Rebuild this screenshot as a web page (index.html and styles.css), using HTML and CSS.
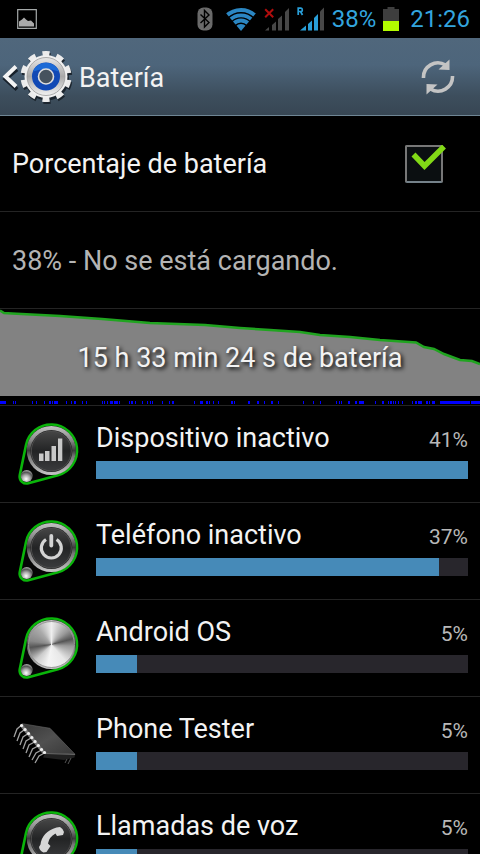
FILE: index.html
```html
<!DOCTYPE html>
<html lang="es">
<head>
<meta charset="utf-8">
<meta name="viewport" content="width=device-width, initial-scale=1">
<title>Batería</title>
<link rel="stylesheet" href="styles.css">
</head>
<body>
<svg class="defs" aria-hidden="true">
  <defs>
    <linearGradient id="rim" x1="0" y1="0" x2="0" y2="1">
      <stop offset="0" stop-color="#c4c4c4"/><stop offset=".3" stop-color="#888"/><stop offset=".5" stop-color="#3c3c3c"/><stop offset=".62" stop-color="#777"/><stop offset="1" stop-color="#c8c8c8"/>
    </linearGradient>
    <linearGradient id="face" x1="0" y1="0" x2="0" y2="1">
      <stop offset="0" stop-color="#464646"/><stop offset=".5" stop-color="#232425"/><stop offset="1" stop-color="#3a3b3d"/>
    </linearGradient>
    <radialGradient id="ball" cx=".45" cy=".75" r=".8">
      <stop offset="0" stop-color="#fff"/><stop offset=".4" stop-color="#aaa"/><stop offset=".7" stop-color="#555"/><stop offset="1" stop-color="#ccc"/>
    </radialGradient>
    <linearGradient id="gear" x1="0" y1="0" x2="0" y2="1">
      <stop offset="0" stop-color="#e8e8e8"/><stop offset=".5" stop-color="#a9a9a9"/><stop offset="1" stop-color="#f2f2f2"/>
    </linearGradient>
    <linearGradient id="chip" x1="0" y1="0" x2="1" y2="1">
      <stop offset="0" stop-color="#383838"/><stop offset=".5" stop-color="#505050"/><stop offset="1" stop-color="#383838"/>
    </linearGradient>
    <clipPath id="wedge"><path d="M15 24L-1 5V0H31V5Z"/></clipPath>
    <g id="badge">
      <path d="M13.900 26.400A25.800 25.800 0 1 1 46 56.200L16.400 64.300A7 7 0 0 1 7.700 56.400Z" fill="#050505" stroke="#0ab50a" stroke-width="2.600"/>
      <circle cx="39.300" cy="31.500" r="24.600" fill="url(#rim)"/>
      <circle cx="39.300" cy="32" r="21" fill="#222"/>
      <circle cx="39.300" cy="32" r="20" fill="url(#face)" stroke="#555" stroke-width=".8"/>
      <circle cx="14.700" cy="57" r="6" fill="url(#ball)"/>
    </g>
  </defs>
</svg>
<div class="app">
  <div class="status">
    <svg class="picture" width="20" height="20" viewBox="0 0 20 20" role="img" aria-label="Imagen"><path d="M.7.7h18.600v18.600H.7z" fill="none" stroke="#a5a9a9" stroke-width="1.200"/><path d="M2 17.500v-5l3-2 2-2 2 2 2 1.500 3-.5 3 3v3z" fill="#aaa"/></svg>
    <svg width="21" height="24" viewBox="0 0 21 24" role="img" aria-label="Bluetooth"><rect x=".5" y=".5" width="15" height="23" rx="6" fill="#6a6a6a"/><path d="M3.500 7.500l8.500 8-4.500 4.500V3.500L12 8l-8.500 8" fill="none" stroke="#000" stroke-width="1.400"/></svg>
    <svg width="30" height="24" viewBox="0 0 30 24" role="img" aria-label="Wi-Fi"><g clip-path="url(#wedge)" fill="none" stroke="#2b86c2" stroke-width="3.800"><circle cx="15" cy="24" r="3.500" stroke-width="7"/><circle cx="15" cy="24" r="10.500"/><circle cx="15" cy="24" r="15.700"/><circle cx="15" cy="24" r="21"/></g></svg>
    <svg width="25" height="24" viewBox="0 0 25 24" role="img" aria-label="Sin señal"><path d="M1 23.500l4-3.500v3.500zM8 18l4-3.500v9H8zM14 12l4-3.500v15h-4zM21 5l4-4v22.500h-4z" fill="#474747"/><path d="M1.200 2.200l8 8M9.200 2.200l-8 8" stroke="#b00d0d" stroke-width="2"/></svg>
    <svg width="27" height="24" viewBox="0 0 27 24" role="img" aria-label="Señal en itinerancia"><path d="M3 23.500l6-5v5zM11 17l4-3.500v10h-4zM17 11l4-4v16.500h-4z" fill="#299fd9"/><path d="M23 4.500l4-4v23h-4z" fill="#474747"/><path d="M1.200 8V1.200H4q1.300 0 1.300 1.700T4 4.500H1.200M3.500 4.500L5.500 8" fill="none" stroke="#299fd9" stroke-width="1.700"/></svg>
    <span>38%</span>
    <svg width="18" height="24" viewBox="0 0 18 24" role="img" aria-label="Batería"><path d="M3.500 0h7v2H15v12H-1V2h4.500z" fill="#3e3e3e"/><path d="M-1 14h16v10H-1z" fill="#b2fc00"/></svg>
    <time>21:26</time>
  </div>
  <header class="bar">
    <button class="up" aria-label="Volver">
      <svg width="75" height="56" viewBox="0 0 75 56">
        <path d="M17 20.500L5.500 30 17 40.500" fill="none" stroke="#17202a" stroke-width="4"/>
        <path d="M16 17.500L5.500 27.500 16 37.500" fill="none" stroke="#f4f4f4" stroke-width="4"/>
        <g transform="translate(46 27.500)">
          <circle cx="1" cy="2" r="22" fill="#1c252e"/>
          <circle cx="1" cy="2" r="22.500" fill="none" stroke="#1c252e" stroke-width="6" pathLength="20" stroke-dasharray="1 1" stroke-dashoffset=".5" transform="rotate(-90 1 2)"/>
          <circle r="22.500" fill="none" stroke="#ececec" stroke-width="6" pathLength="20" stroke-dasharray="1 1" stroke-dashoffset=".5" transform="rotate(-90)"/>
          <circle r="21.500" fill="#f0f0f0"/>
          <circle r="19" fill="url(#gear)" stroke="#999" stroke-width=".8"/>
          <circle r="14" fill="#1149b5"/>
          <path d="M-13-5A14 14 0 0 1 13-5Q0-10-13-5Z" fill="#1c6ad6"/>
          <circle r="7.500" fill="#46525e" stroke="#ddd" stroke-width="1.600"/>
        </g>
      </svg>
    </button>
    <h1>Batería</h1>
    <button class="refresh" aria-label="Actualizar">
      <svg width="36" height="36" viewBox="0 0 36 36"><g fill="none" stroke="#c4c4c4" stroke-width="3.600"><path d="M3.500 19A14.500 14.500 0 0 1 25.500 6"/><path d="M32.500 17A14.500 14.500 0 0 1 10.500 30"/></g><path d="M29.500.5v10.500l-11-.5zM6.500 35.500V25l11 .5z" fill="#c4c4c4"/></svg>
    </button>
  </header>
  <main>
    <label class="option">
      <span>Porcentaje de batería</span>
      <span class="tick">
        <input type="checkbox" checked>
        <svg width="44" height="38" viewBox="0 0 44 38" aria-hidden="true"><path d="M8.500 9.500L19.500 21 39 1.500" fill="none" stroke="#82d916" stroke-width="5.500"/></svg>
      </span>
    </label>
    <p class="state">38% - No se está cargando.</p>
    <section class="history">
      <svg class="curve" viewBox="0 0 480 96" preserveAspectRatio="none" aria-hidden="true">
        <path d="M0 1.500L4 4 12 4.500 60 7 102 10 150 14 205 16 240 19 270 21 300 23 320 26 350 28 380 31 416 33.500 424 38 434 40 444 45 452 48 460 51 472 52 480 55V87H0Z" fill="#828282"/>
        <path d="M0 1.500L4 4 12 4.500 60 7 102 10 150 14 205 16 240 19 270 21 300 23 320 26 350 28 380 31 416 33.500 424 38 434 40 444 45 452 48 460 51 472 52 480 55" fill="none" stroke="#20a420" stroke-width="2.500"/>
        <path d="M0 92h6v3H0zm13 0h1v3h-1zm2 0h1v3h-1zm17 0h1v3h-1zm4 0h1v3h-1zm8 0h1v3h-1zm5 0h2v3h-2zm3 0h1v3h-1zm2 0h4v3h-4zm12 0h1v3h-1zm5 0h1v3h-1zm3 0h2v3h-2zm8 0h1v3h-1zm4 0h1v3h-1zm16 0h1v3h-1zm2 0h1v3h-1zm3 0h1v3h-1zm3 0h3v3h-3zm4 0h4v3h-4zm5 0h1v3h-1zm10 0h1v3h-1zm2 0h2v3h-2zm4 0h1v3h-1zm7 0h1v3h-1zm5 0h1v3h-1zm3 0h1v3h-1zm2 0h1v3h-1zm10 0h1v3h-1zm7 0h1v3h-1zm3 0h2v3h-2zm22 0h1v3h-1zm6 0h3v3h-3zm6 0h2v3h-2zm3 0h1v3h-1zm4 0h1v3h-1zm5 0h1v3h-1zm13 0h2v3h-2zm3 0h1v3h-1zm14 0h2v3h-2zm9 0h2v3h-2zm7 0h1v3h-1zm7 0h2v3h-2zm7 0h1v3h-1zm25 0h1v3h-1zm10 0h1v3h-1zm7 0h1v3h-1zm16 0h1v3h-1zm3 0h1v3h-1zm2 0h1v3h-1zm7 0h2v3h-2zm7 0h2v3h-2zm4 0h5v3h-5zm16 0h1v3h-1zm7 0h2v3h-2zm6 0h1v3h-1zm2 0h2v3h-2zm3 0h1v3h-1zm2 0h1v3h-1zm3 0h1v3h-1zm4 0h1v3h-1zm10 0h1v3h-1zm3 0h2v3h-2zm3 0h4v3h-4zm8 0h2v3h-2zm3 0h1v3h-1zm3 0h3v3h-3zm8 0h30v3h-30zm31 0h9v3h-9z" fill="#00f"/>
      </svg>
      <p>15 h 33 min 24 s de batería</p>
    </section>
    <ul class="usage">
      <li>
        <svg class="icon" viewBox="0 0 72 72" aria-hidden="true"><use href="#badge"/><path d="M27 34.500h4.500V42H27zM33 32h4.500v10H33zM39.500 27H44v15h-4.500zM46 19.500h4.300V42H46z" fill="#c8c8c8"/></svg>
        <div class="detail"><div class="line"><span>Dispositivo inactivo</span><small>41%</small></div><div class="track"><div class="fill" style="width:100%"></div></div></div>
      </li>
      <li>
        <svg class="icon" viewBox="0 0 72 72" aria-hidden="true"><use href="#badge"/><path d="M34 23.500A10 10 0 1 0 44.600 23.500" fill="none" stroke="#d4d4d4" stroke-width="3.200"/><path d="M39.300 20v9.500" stroke="#d4d4d4" stroke-width="3.800" stroke-linecap="round"/></svg>
        <div class="detail"><div class="line"><span>Teléfono inactivo</span><small>37%</small></div><div class="track"><div class="fill" style="width:92.2%"></div></div></div>
      </li>
      <li>
        <svg class="icon" viewBox="0 0 72 72" aria-hidden="true"><use href="#badge"/><foreignObject x="16" y="8" width="47" height="47"><div class="steel"></div></foreignObject></svg>
        <div class="detail"><div class="line"><span>Android OS</span><small>5%</small></div><div class="track"><div class="fill" style="width:11%"></div></div></div>
      </li>
      <li>
        <svg class="icon" viewBox="0 0 72 72" aria-hidden="true">
          <path d="M10 13.700L38 18.300 63 44.300 33 43.300Z" fill="url(#chip)" stroke="#666" stroke-width=".6"/>
          <path d="M33 43.300L63 44.300 62.500 47.500 52 50 31 47.500Z" fill="#202020"/>
          <path d="M33 43.500L63 44.500" stroke="#777" stroke-width=".8"/>
          <path d="M59 48l-3 6M55 49l-2 4" stroke="#555" stroke-width="1"/>
          <path d="M9 15L32 43" stroke="#777" stroke-width="3"/>
          <path d="M8.500 16L5 19 2 27M12 20L8 23 5 31M15.500 24L11 27 8 35M19 28L14 31 11 39M22.500 32L17 35 14 43M26 36L20.500 39 17 47M29.500 40L24 43 20 50M32.500 43L27 46 23 53" fill="none" stroke="#a0a0a0" stroke-width="1.300"/>
          <path d="M9.500 15.500h.1M13 19.500h.1M16.500 23.500h.1M19.800 27.500h.1M23 31.500h.1M26.300 35.500h.1M29.500 39.500h.1M32.500 42.500h.1" stroke="#eee" stroke-width="3.200" stroke-linecap="round"/>
        </svg>
        <div class="detail"><div class="line"><span>Phone Tester</span><small>5%</small></div><div class="track"><div class="fill" style="width:11%"></div></div></div>
      </li>
      <li>
        <svg class="icon" viewBox="0 0 72 72" aria-hidden="true"><use href="#badge"/><path d="M44.500 20.500L48 20Q51.500 22 52 25L51 28 45 29 43.500 26.500Q37 30 36 36.500L38.500 39 34.500 45 31.500 45.500Q27.500 43.500 27 40L28.500 37.500Q30 25 44.500 20.500Z" fill="#d6d6d6"/></svg>
        <div class="detail"><div class="line"><span>Llamadas de voz</span><small>5%</small></div><div class="track"><div class="fill" style="width:11%"></div></div></div>
      </li>
    </ul>
  </main>
</div>
</body>
</html>
```
FILE: styles.css
```css
* {
  box-sizing: border-box;
}

body {
  margin: 0;
  background: #000;
  color: #f3f3f3;
  font: 27px/32px Roboto, sans-serif;
}

h1,
p,
ul {
  margin: 0;
  padding: 0;
}

button {
  display: flex;
  padding: 0;
  border: 0;
  background: none;
}

svg {
  display: block;
  flex: none;
}

.defs {
  position: absolute;
  width: 0;
  height: 0;
}

.app {
  display: flex;
  flex-direction: column;
  height: 100vh;
  overflow: hidden;
}

.status {
  display: flex;
  flex: none;
  align-items: center;
  gap: 8px;
  height: 38px;
  padding: 0 10px 0 17px;
  color: #33a5df;
  font-size: 24px;
}

.status svg {
  overflow: visible;
}

.picture {
  margin-right: auto;
}

.bar {
  display: flex;
  flex: none;
  align-items: center;
  gap: 4px;
  height: 78px;
  padding-right: 24px;
  border-bottom: 1px solid #6f8694;
  background: linear-gradient(#50677c, #4d657b 35%, #3d4e5d 75%, #374653);
}

h1 {
  flex: 1;
  padding-top: 2px;
  font-size: 27px;
  font-weight: 400;
}

main {
  flex: 1;
  min-height: 0;
  overflow: hidden;
}

.option,
.state,
.history,
.usage li {
  border-bottom: 1px solid #242424;
}

.option {
  display: flex;
  align-items: center;
  justify-content: space-between;
  padding: 29px 31px 28px 12px;
}

.tick {
  display: grid;
}

.tick > * {
  grid-area: 1 / 1;
}

.tick input {
  width: 38px;
  height: 38px;
  margin: 0;
  appearance: none;
  border: 2px solid #777;
  border-bottom-color: #75828a;
  border-radius: 2px;
  background: #0b0f11;
}

.tick svg {
  pointer-events: none;
}

.state {
  padding: 33px 12px 31px;
  color: #b4b4b4;
}

.history {
  display: grid;
  align-items: center;
  text-align: center;
}

.history > * {
  grid-area: 1 / 1;
}

.curve {
  width: 100%;
  height: 96px;
}

.history p {
  z-index: 1;
  padding-top: 2px;
  text-shadow: 2px 2px 4px #000;
}

.usage {
  list-style: none;
}

.usage li {
  display: flex;
  gap: 12px;
  padding: 13px 12px 11px;
}

.icon {
  width: 72px;
  height: 72px;
}

.detail {
  flex: 1;
  padding-top: 3px;
}

.line {
  display: flex;
  align-items: baseline;
  justify-content: space-between;
  height: 32px;
  margin-bottom: 7px;
}

.line small {
  color: #b8b8b8;
  font-size: 21px;
}

.track {
  height: 18px;
  background: #28262c;
}

.fill {
  height: 100%;
  background: #468ab8;
}

.steel {
  height: 100%;
  border: 1px solid #999;
  border-radius: 50%;
  background: conic-gradient(#eee, #999 50deg, #555 75deg, #999 95deg, #e8e8e8 140deg, #f4f4f4 190deg, #ccc 225deg, #555 262deg, #888 280deg, #aaa 320deg, #eee);
}
```
